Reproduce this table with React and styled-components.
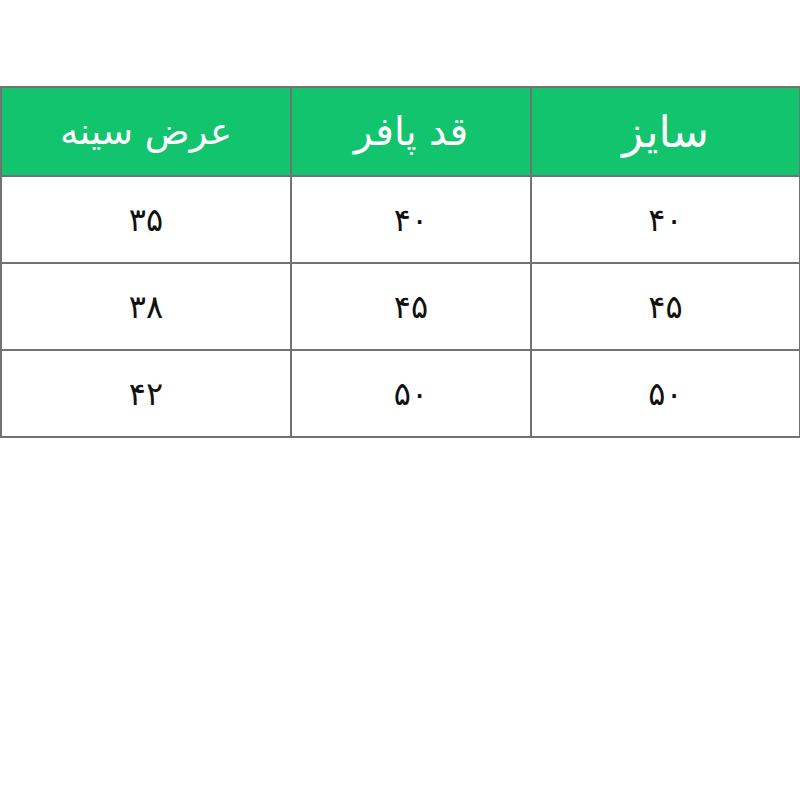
import React from 'react';
import styled, { createGlobalStyle } from 'styled-components';

const GlobalStyle = createGlobalStyle`
  html, body {
    margin: 0;
    padding: 0;
    background: #ffffff;
  }
  body {
    font-family: "DejaVu Sans", "Noto Sans", sans-serif;
  }
`;

const Page = styled.div`
  width: 800px;
  height: 800px;
  padding-top: 86px;
  box-sizing: border-box;
  background: #ffffff;
`;

const Table = styled.table`
  width: 799px;
  border-collapse: collapse;
  direction: rtl;
  table-layout: fixed;
`;

const HeadCell = styled.th`
  height: 87px;
  background: #12c46e;
  color: #ffffff;
  font-weight: 400;
  font-size: ${p => p.$size || 34}px;
  border: 2px solid #727272;
  text-align: center;
  vertical-align: middle;
  padding: 0;
`;

const Cell = styled.td`
  height: 85px;
  border: 2px solid #727272;
  color: #111111;
  font-size: 32px;
  text-align: center;
  vertical-align: middle;
  padding: 0;
`;

const columns = [
  { title: 'سایز', width: 269, size: 44 },
  { title: 'قد پافر', width: 240, size: 39 },
  { title: 'عرض سینه', width: 290, size: 37 },
];

const rows = [
  ['۴۰', '۴۰', '۳۵'],
  ['۴۵', '۴۵', '۳۸'],
  ['۵۰', '۵۰', '۴۲'],
];

export default function App() {
  return (
    <>
      <GlobalStyle />
      <Page>
        <Table>
          <colgroup>
            {columns.map(c => (
              <col key={c.title} style={{ width: c.width }} />
            ))}
          </colgroup>
          <thead>
            <tr>
              {columns.map(c => (
                <HeadCell key={c.title} $size={c.size}>
                  {c.title}
                </HeadCell>
              ))}
            </tr>
          </thead>
          <tbody>
            {rows.map((r, i) => (
              <tr key={i}>
                {r.map((v, j) => (
                  <Cell key={j}>{v}</Cell>
                ))}
              </tr>
            ))}
          </tbody>
        </Table>
      </Page>
    </>
  );
}
